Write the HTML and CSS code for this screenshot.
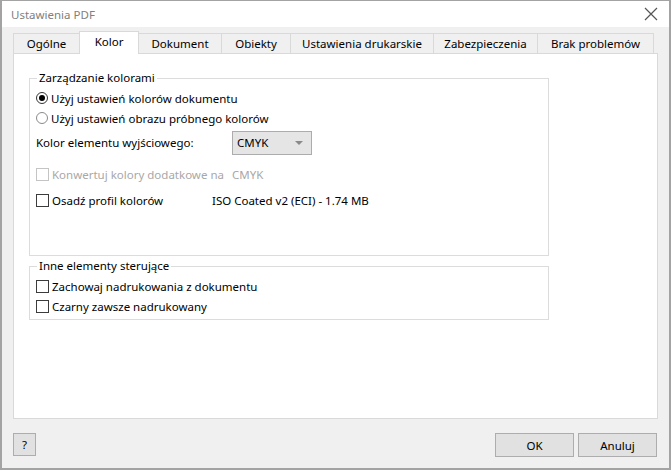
FILE: index.html
```html
<!DOCTYPE html>
<html lang="pl">
<head>
<meta charset="utf-8">
<title>Ustawienia PDF</title>
<link rel="stylesheet" href="styles.css">
</head>
<body>
<div class="window">
  <div class="titlebar">
    <span class="title">Ustawienia PDF</span>
    <svg class="close" width="14" height="14" viewBox="0 0 14 14"><path d="M1 1 L13 13 M13 1 L1 13" stroke="#555" stroke-width="1.2" fill="none"/></svg>
  </div>
  <div class="body">
    <div class="tabs">
      <div class="tab t1">Ogólne</div>
      <div class="tab t2 active">Kolor</div>
      <div class="tab t3">Dokument</div>
      <div class="tab t4">Obiekty</div>
      <div class="tab t5">Ustawienia drukarskie</div>
      <div class="tab t6">Zabezpieczenia</div>
      <div class="tab t7">Brak problemów</div>
    </div>
    <div class="panel">
      <fieldset class="group g1">
        <legend>Zarządzanie kolorami</legend>
        <div class="row"><span class="rb checked"><span class="dot"></span></span><span>Użyj ustawień kolorów dokumentu</span></div>
        <div class="row"><span class="rb off"></span><span>Użyj ustawień obrazu próbnego kolorów</span></div>
        <div class="row combo-row">
          <span class="lbl-wide">Kolor elementu wyjściowego:</span>
          <div class="combo"><span>CMYK</span><span class="arrow"></span></div>
        </div>
        <div class="row disabled r-conv">
          <span class="col-wide"><span class="cb dis"></span><span>Konwertuj kolory dodatkowe na</span></span>
          <span>CMYK</span>
        </div>
        <div class="row r-embed">
          <span class="col-mid"><span class="cb"></span><span>Osadź profil kolorów</span></span>
          <span>ISO Coated v2 (ECI) - 1.74 MB</span>
        </div>
      </fieldset>
      <fieldset class="group g2">
        <legend>Inne elementy sterujące</legend>
        <div class="row"><span class="cb"></span><span>Zachowaj nadrukowania z dokumentu</span></div>
        <div class="row"><span class="cb"></span><span>Czarny zawsze nadrukowany</span></div>
      </fieldset>
    </div>
    <div class="footer">
      <button class="btn help">?</button>
      <div class="spacer"></div>
      <button class="btn main">OK</button>
      <button class="btn main">Anuluj</button>
    </div>
  </div>
</div>
</body>
</html>
```
FILE: styles.css
```css
* { box-sizing: border-box; }
html, body { margin: 0; padding: 0; background: #fff; }
body {
  font-family: "Segoe UI", "Noto Sans", "Open Sans", sans-serif;
  font-size: 11.5px;
  color: #000;
}
.window {
  width: 671px;
  height: 470px;
  border: 2px solid #a3a3a3;
  border-top-width: 1px;
  display: flex;
  flex-direction: column;
  background: #f0f0f0;
}
.titlebar {
  height: 26px;
  background: #fff;
  display: flex;
  align-items: center;
  padding: 0 11px 0 9px;
}
.title { color: #808080; font-size: 11.5px; flex: 1; }
.body {
  flex: 1;
  display: flex;
  flex-direction: column;
  padding: 4px 11px 11px 11px;
}
.tabs {
  display: flex;
  height: 22px;
  position: relative;
  z-index: 1;
}
.tab {
  margin-top: 2px;
  height: 20px;
  border: 1px solid #d9d9d9;
  border-bottom: none;
  margin-right: -1px;
  display: flex;
  align-items: center;
  justify-content: center;
  background: #f0f0f0;
  line-height: 1;
  font-size: 11.5px;
}
.tab.active {
  margin-top: 0;
  height: 23px;
  background: #fff;
  padding-bottom: 2px;
}
.t1 { width: 67px; }
.t2 { width: 60px; }
.t3 { width: 84px; }
.t4 { width: 70px; }
.t5 { width: 144px; }
.t6 { width: 105px; }
.t7 { width: 117px; }
.panel {
  height: 366px;
  background: #fff;
  border: 1px solid #d9d9d9;
  padding: 16px 0 0 15px;
}
.group {
  width: 520px;
  margin: 0;
  border: 1px solid #dcdcdc;
  padding: 0 6px 0 6px;
  min-width: 0;
}
.group legend {
  padding: 0 2px;
  line-height: 16px;
  margin-left: 1px;
}
.g1 { padding-top: 2px; padding-bottom: 45px; }
.g2 { margin-top: 2px; padding-top: 2px; padding-bottom: 3px; }
.row {
  height: 20px;
  display: flex;
  align-items: center;
  white-space: nowrap;
}
.combo-row { height: 25px; margin-top: 2px; }
.r-conv { margin-top: 9px; }
.r-embed { margin-top: 6px; }
.disabled { color: #a8a8a8; }
.lbl-wide { width: 196px; }
.col-wide { width: 196px; display: flex; align-items: center; }
.col-mid { width: 176px; display: flex; align-items: center; }
.combo {
  width: 80px;
  height: 24px;
  background: #e5e5e5;
  border: 1px solid #acacac;
  display: flex;
  align-items: center;
  justify-content: space-between;
  padding: 0 8px 0 4px;
}
.arrow {
  width: 0;
  height: 0;
  border-left: 4px solid transparent;
  border-right: 4px solid transparent;
  border-top: 4px solid #8a8a8a;
}
.cb {
  width: 13px;
  height: 13px;
  border: 1px solid #3c3c3c;
  background: #fff;
  margin-right: 3px;
  flex: none;
}
.cb.dis { border-color: #c4c4c4; }
.rb {
  width: 12px;
  height: 12px;
  border: 1px solid #333;
  border-radius: 50%;
  margin-right: 3px;
  display: flex;
  align-items: center;
  justify-content: center;
  flex: none;
}
.rb.off { border-color: #8a8a8a; }
.dot { width: 6px; height: 6px; background: #000; border-radius: 50%; }
.footer {
  margin-top: 14px;
  height: 24px;
  display: flex;
  padding-right: 1px;
}
.spacer { flex: 1; }
.btn {
  font-family: inherit;
  font-size: 11.5px;
  background: #e1e1e1;
  border: 1px solid #adadad;
  height: 24px;
  padding: 0;
  color: #000;
}
.help { width: 23px; height: 23px; }
.main { width: 79px; margin-left: 4px; }
```
